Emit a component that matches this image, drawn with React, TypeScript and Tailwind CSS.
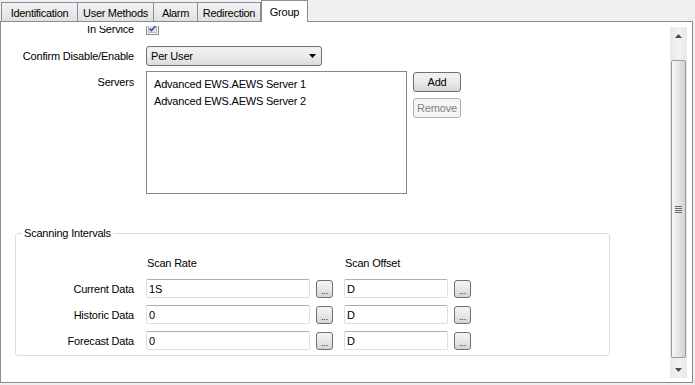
import React from "react";

const tabs = [
  { label: "Identification", w: "w-[76px]" },
  { label: "User Methods", w: "w-[76px]" },
  { label: "Alarm", w: "w-[44px]" },
  { label: "Redirection", w: "w-[64px]" },
];

const rows = [
  { label: "Current Data", rate: "1S", offset: "D" },
  { label: "Historic Data", rate: "0", offset: "D" },
  { label: "Forecast Data", rate: "0", offset: "D" },
];

function DotsButton() {
  return (
    <button
      type="button"
      className="w-[17px] h-[18px] flex items-end justify-center pb-[1px] border border-[#707070] rounded-[3px] bg-linear-to-b from-[#f4f4f4] via-[#e8e8e8] to-[#d4d4d4] text-[9px] leading-[9px] text-[#222]"
    >
      ...
    </button>
  );
}

function TextBox({ value, w }: { value: string; w: string }) {
  return (
    <div
      className={`${w} h-[19px] flex items-center pl-[2px] border border-[#dbdfe6] border-t-[#abadb3] rounded-[2px] bg-white`}
    >
      {value}
    </div>
  );
}

function Scrollbar() {
  return (
    <div className="w-[17px] mt-[1px] flex flex-col bg-linear-to-r from-[#e8e8e8] via-[#f2f2f2] to-[#e8e8e8]">
      <div className="h-[17px] flex items-center justify-center">
        <svg width="7" height="4" viewBox="0 0 7 4">
          <path d="M0 4 L3.5 0 L7 4 Z" fill="#4a4a4a" />
        </svg>
      </div>
      <div className="h-[16px]" />
      <div className="h-[298px] mx-[1px] flex items-center justify-center border border-[#9a9a9a] rounded-[2px] bg-linear-to-r from-[#f6f6f6] via-[#e6e6e6] to-[#d2d2d2]">
        <div className="flex flex-col gap-[1px]">
          <div className="w-[7px] h-px bg-[#6a6a6a]" />
          <div className="w-[7px] h-px bg-[#6a6a6a]" />
          <div className="w-[7px] h-px bg-[#6a6a6a]" />
          <div className="w-[7px] h-px bg-[#6a6a6a]" />
        </div>
      </div>
      <div className="flex-1" />
      <div className="h-[17px] flex items-center justify-center">
        <svg width="7" height="4" viewBox="0 0 7 4">
          <path d="M0 0 L7 0 L3.5 4 Z" fill="#4a4a4a" />
        </svg>
      </div>
    </div>
  );
}

export default function App() {
  return (
    <div className="w-[695px] h-[385px] bg-[#f0f0f0] text-[11px] leading-[14px] tracking-[-0.2px] text-black font-['Liberation_Sans',Arial,sans-serif]">
      {/* Tab strip */}
      <div className="h-[21px] flex items-end pl-[1px]">
        {tabs.map((t, i) => (
          <div
            key={t.label}
            className={`${t.w} h-[19px] flex items-center justify-center pt-[1px] border-t border-l border-[#898c95] ${
              i === tabs.length - 1 ? "border-r" : ""
            } bg-linear-to-b from-[#f3f3f3] to-[#e1e1e1] whitespace-nowrap tracking-[-0.3px]`}
          >
            {t.label}
          </div>
        ))}
        <div className="relative z-10 -mb-px w-[47px] h-[22px] flex justify-center pt-[4px] border-t border-l border-r border-[#898c95] bg-white">
          Group
        </div>
      </div>

      {/* Panel */}
      <div className="w-[693px] h-[362px] border border-[#898c95] bg-white flex pt-[4px] pl-[3px] pr-[5px] pb-[4px]">
        <div className="flex-1 overflow-hidden">
          <div className="-mt-[4px]">
            {/* In Service */}
            <div className="flex items-center h-[13px]">
              <div className="w-[130px] mr-[12px] text-right">In Service</div>
              <svg width="13" height="13" viewBox="0 0 13 13">
                <rect x="0.5" y="0.5" width="12" height="12" fill="#f4f4f4" stroke="#8f8f8f" />
                <rect x="2.5" y="2.5" width="8" height="8" fill="#dfe4ee" stroke="#b4bac6" />
                <path d="M3.5 6.5 L5.5 8.5 L9.5 4" fill="none" stroke="#3b4f86" strokeWidth="1.6" />
              </svg>
            </div>

            {/* Confirm Disable/Enable */}
            <div className="flex items-center mt-[11px] h-[20px]">
              <div className="w-[130px] mr-[12px] text-right">Confirm Disable/Enable</div>
              <div className="w-[176px] h-[20px] flex items-center justify-between pl-[4px] pr-[5px] border border-[#707070] rounded-[3px] bg-linear-to-b from-[#f2f2f2] via-[#ebebeb] to-[#dcdcdc]">
                <span>Per User</span>
                <svg width="7" height="4" viewBox="0 0 7 4">
                  <path d="M0 0 L7 0 L3.5 4 Z" fill="#000" />
                </svg>
              </div>
            </div>

            {/* Servers */}
            <div className="flex items-start mt-[5px]">
              <div className="w-[130px] mr-[12px] pt-[4px] text-right">Servers</div>
              <div className="w-[261px] h-[123px] border border-[#828790] bg-white pt-[3px] pl-[7px]">
                <div className="h-[17px] flex items-center">Advanced EWS.AEWS Server 1</div>
                <div className="h-[17px] flex items-center">Advanced EWS.AEWS Server 2</div>
              </div>
              <div className="ml-[6px] mt-[1px] flex flex-col gap-[6px]">
                <button
                  type="button"
                  className="w-[48px] h-[20px] border border-[#707070] rounded-[3px] bg-linear-to-b from-[#f2f2f2] via-[#ebebeb] to-[#d4d4d4]"
                >
                  Add
                </button>
                <button
                  type="button"
                  disabled
                  className="w-[48px] h-[20px] border border-[#adb2b5] rounded-[3px] bg-[#f4f4f4] text-[#838383]"
                >
                  Remove
                </button>
              </div>
            </div>

            {/* Scanning Intervals */}
            <fieldset className="ml-[11px] mt-[32px] w-[595px] h-[130px] border border-[#d5dfe5] rounded-[3px] pl-[6px]">
              <legend className="px-[2px] leading-[14px]">Scanning Intervals</legend>
              <div className="flex mt-[16px]">
                <div className="w-[112px] mr-[12px]" />
                <div className="w-[198px] pl-[1px]">Scan Rate</div>
                <div className="pl-[1px]">Scan Offset</div>
              </div>
              <div className="mt-[9px] flex flex-col gap-[7px]">
                {rows.map((r) => (
                  <div key={r.label} className="flex items-center h-[19px]">
                    <div className="w-[112px] mr-[12px] text-right">{r.label}</div>
                    <TextBox value={r.rate} w="w-[164px]" />
                    <div className="ml-[6px]">
                      <DotsButton />
                    </div>
                    <div className="ml-[11px]">
                      <TextBox value={r.offset} w="w-[104px]" />
                    </div>
                    <div className="ml-[6px]">
                      <DotsButton />
                    </div>
                  </div>
                ))}
              </div>
            </fieldset>
          </div>
        </div>
        <Scrollbar />
      </div>
    </div>
  );
}
